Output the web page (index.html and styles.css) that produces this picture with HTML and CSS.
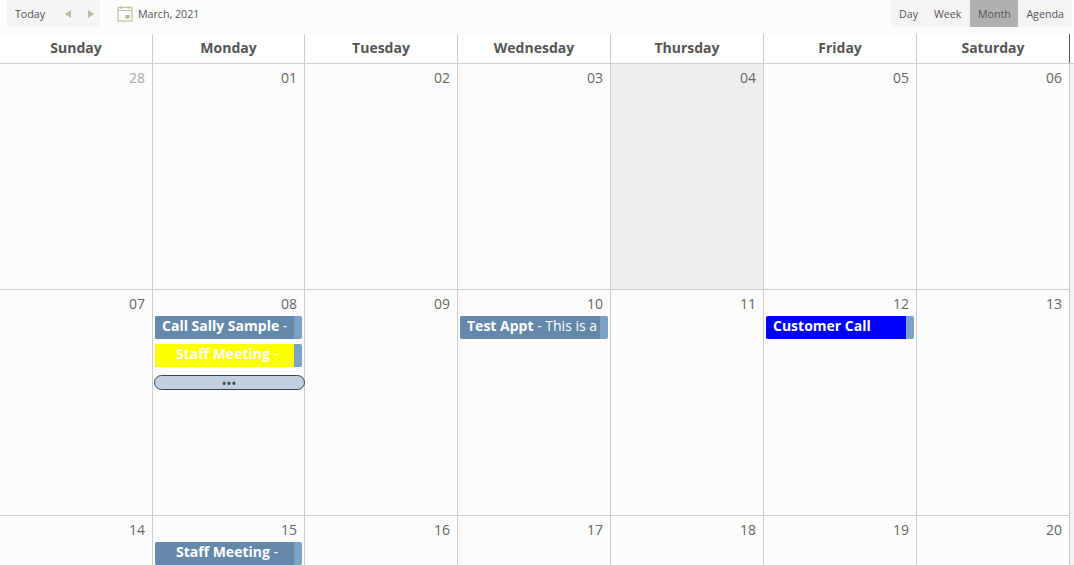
FILE: index.html
```html
<!DOCTYPE html>
<html lang="en">
<head>
<meta charset="utf-8">
<title>Calendar</title>
<link rel="stylesheet" href="styles.css">
</head>
<body>
<div class="toolbar">
  <div class="group group-left">
    <span class="tool-text">Today</span>
    <span class="arrows">
      <svg class="arrow" width="8" height="10" viewBox="0 0 8 10"><path d="M7 1v8L1 5z" fill="#b9bda0"/></svg>
      <svg class="arrow" width="8" height="10" viewBox="0 0 8 10"><path d="M1 1v8l6-4z" fill="#b9bda0"/></svg>
    </span>
  </div>
  <div class="date-box">
    <svg width="16" height="16" viewBox="0 0 16 16" fill="none" stroke="#bfc29c" stroke-width="1.2"><rect x="1" y="1.5" width="14" height="13.5"/><path d="M1 4.5h14M4 0v3M12 0v3"/><rect x="8.5" y="9" width="4" height="3.5" fill="#b5b68a" stroke="none"/></svg>
    <span class="tool-text">March, 2021</span>
  </div>
  <div class="group group-right">
    <span class="view">Day</span>
    <span class="view">Week</span>
    <span class="view view-active">Month</span>
    <span class="view">Agenda</span>
  </div>
</div>
<div class="head">
  <div class="head-cell">Sunday</div>
  <div class="head-cell">Monday</div>
  <div class="head-cell">Tuesday</div>
  <div class="head-cell">Wednesday</div>
  <div class="head-cell">Thursday</div>
  <div class="head-cell">Friday</div>
  <div class="head-cell head-last">Saturday</div>
</div>
<div class="grid">
  <div class="day"><div class="num num-muted">28</div></div>
  <div class="day"><div class="num">01</div></div>
  <div class="day"><div class="num">02</div></div>
  <div class="day"><div class="num">03</div></div>
  <div class="day day-today"><div class="num">04</div></div>
  <div class="day"><div class="num">05</div></div>
  <div class="day"><div class="num">06</div></div>

  <div class="day"><div class="num">07</div></div>
  <div class="day">
    <div class="num">08</div>
    <div class="event"><div class="event-body"><b>Call Sally Sample</b> -</div></div>
    <div class="event"><div class="event-body event-center event-yellow"><b>Staff Meeting</b> -</div></div>
    <div class="more"><span class="dots">•••</span></div>
  </div>
  <div class="day"><div class="num">09</div></div>
  <div class="day">
    <div class="num">10</div>
    <div class="event event-wide"><div class="event-body"><b>Test Appt</b> - This is a</div></div>
  </div>
  <div class="day"><div class="num">11</div></div>
  <div class="day">
    <div class="num">12</div>
    <div class="event event-wide"><div class="event-body event-blue"><b>Customer Call</b></div></div>
  </div>
  <div class="day"><div class="num">13</div></div>

  <div class="day"><div class="num">14</div></div>
  <div class="day">
    <div class="num">15</div>
    <div class="event"><div class="event-body event-center"><b>Staff Meeting</b> -</div></div>
  </div>
  <div class="day"><div class="num">16</div></div>
  <div class="day"><div class="num">17</div></div>
  <div class="day"><div class="num">18</div></div>
  <div class="day"><div class="num">19</div></div>
  <div class="day"><div class="num">20</div></div>
</div>
<div class="scrollbar"></div>
</body>
</html>
```

FILE: styles.css
```css
* { box-sizing: border-box; }
html, body { height: 100%; }
body {
  margin: 0;
  height: 565px;
  overflow: hidden;
  background: #fcfcfc;
  font-family: "Open Sans", "Noto Sans", sans-serif;
  color: #555;
  position: relative;
}
.toolbar {
  display: flex;
  align-items: flex-start;
  height: 34px;
  padding: 0 2px 0 7px;
  background: #fcfcfc;
}
.group {
  display: flex;
  align-items: center;
  height: 27px;
  background: #f4f4f4;
  border-radius: 0 0 4px 4px;
}
.group-left { width: 93px; padding-left: 8px; }
.tool-text { font-size: 10.67px; color: #555; }
.arrows { display: flex; gap: 15px; margin-left: 19px; }
.arrow { display: block; }
.date-box {
  display: flex;
  align-items: center;
  gap: 5px;
  height: 27px;
  margin-left: 17px;
}
.group-right { margin-left: auto; width: 181px; }
.view {
  display: flex;
  align-items: center;
  height: 27px;
  padding: 0 8px;
  font-size: 10.67px;
  color: #555;
}
.view-active { background: #b0b0b0; padding: 0 7.5px 0 8px; margin-left: .6px; }
.head {
  display: grid;
  grid-template-columns: 153px 152px repeat(5, 153px);
  height: 30px;
  background: #fff;
  border-bottom: 1px solid #ccc;
}
.head-cell {
  display: flex;
  align-items: center;
  justify-content: center;
  padding-bottom: 3px;
  font-size: 14px;
  font-weight: 700;
  color: #555;
  border-right: 1px solid #ccc;
}
.head-last { border-right-color: #555; }
.grid {
  display: grid;
  grid-template-columns: 153px 152px repeat(5, 153px);
  grid-auto-rows: 226px;
}
.day {
  border-right: 1px solid #ccc;
  border-bottom: 1px solid #ccc;
  padding-top: 4px;
  min-width: 0;
}
.day-today { background: #eee; }
.num {
  height: 22px;
  padding-right: 7px;
  text-align: right;
  font-size: 14px;
  line-height: 20px;
  color: #666;
}
.num-muted { color: #a5a5a5; }
.event {
  height: 23px;
  margin: 0 2px 5px;
  width: 147px;
  background: #7ba3c8;
  border-radius: 2px;
  overflow: hidden;
}
.event-wide { width: 148px; }
.event-body {
  height: 23px;
  width: calc(100% - 8px);
  padding-left: 7px;
  overflow: hidden;
  white-space: nowrap;
  background: #6489ab;
  color: #fff;
  font-size: 14px;
  line-height: 20px;
}
.event-center { text-align: center; padding-left: 5px; }
.event-yellow { background: #ff0; }
.event-blue { background: #00f; }
.more {
  display: flex;
  align-items: center;
  justify-content: center;
  height: 15px;
  margin: 8px 0 0 1px;
  width: 151px;
  background: #c2cfe0;
  border: 1px solid #444;
  border-radius: 8px;
}
.dots {
  font-size: 10px;
  font-weight: 700;
  line-height: 1;
  color: #444;
  letter-spacing: 1px;
}
.scrollbar {
  position: absolute;
  top: 64px;
  right: 0;
  width: 4px;
  height: 501px;
  background: #f1f1f1;
}
```
